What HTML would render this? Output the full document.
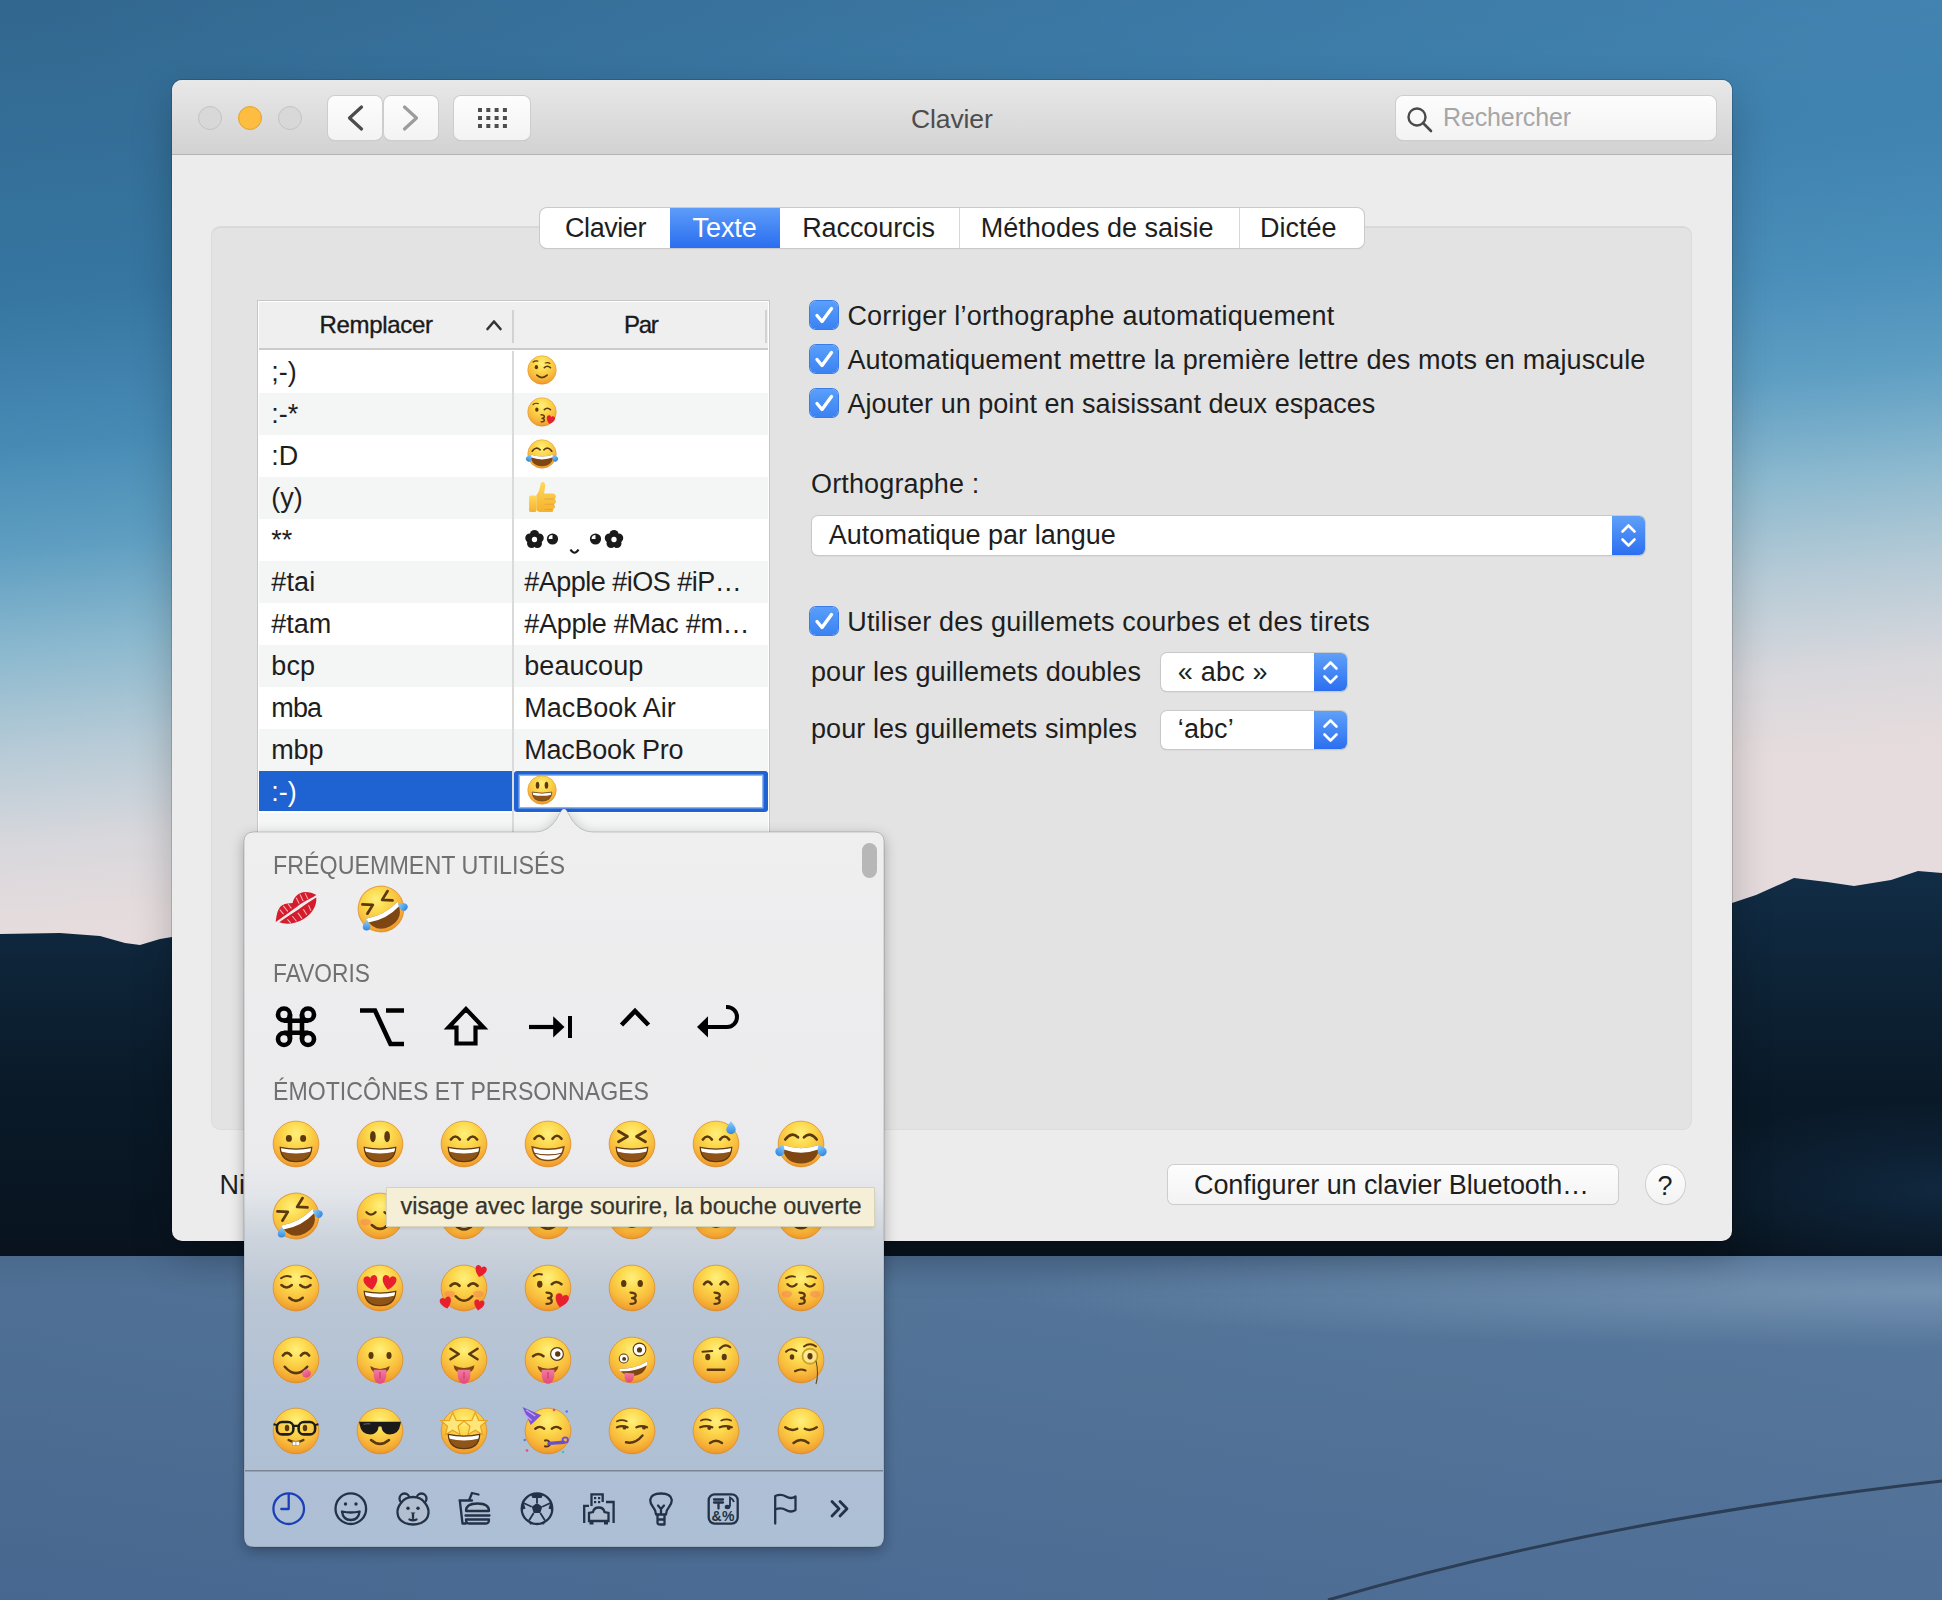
<!DOCTYPE html><html><head><meta charset="utf-8"><title>Clavier</title><style>
*{margin:0;padding:0;box-sizing:border-box}
html,body{width:1942px;height:1600px;overflow:hidden;background:#3a6b91}
body{position:relative;font-family:"Liberation Sans",sans-serif}
.a{position:absolute}
.t{position:absolute;white-space:nowrap;line-height:normal;font-family:"Liberation Sans",sans-serif}
svg.e{position:absolute;overflow:visible}
</style></head><body>
<svg width="0" height="0" style="position:absolute"><defs><radialGradient id="fg" cx="50%" cy="28%" r="75%"><stop offset="0" stop-color="#fff07c"/><stop offset="0.35" stop-color="#fcd84c"/><stop offset="0.68" stop-color="#f8bb3c"/><stop offset="0.88" stop-color="#f2a230"/><stop offset="1" stop-color="#e48c24"/></radialGradient><linearGradient id="dg" x1="0" y1="0" x2="0" y2="1"><stop offset="0" stop-color="#8fd0ff"/><stop offset="1" stop-color="#2f86e0"/></linearGradient><linearGradient id="tg" x1="0" y1="0" x2="0" y2="1"><stop offset="0" stop-color="#f37aa0"/><stop offset="1" stop-color="#e2497a"/></linearGradient><linearGradient id="hg" x1="0" y1="0" x2="0" y2="1"><stop offset="0" stop-color="#ffd85a"/><stop offset="1" stop-color="#f5b22c"/></linearGradient><symbol id="e-grin" viewBox="0 0 64 64" overflow="visible"><circle cx="32" cy="32" r="30.5" fill="url(#fg)"/><circle cx="32" cy="32" r="30.5" fill="none" stroke="#d98a28" stroke-width="1.3" opacity="0.75"/><ellipse cx="22.5" cy="24.5" rx="4" ry="4.6" fill="#5b3810"/><ellipse cx="41.5" cy="24.5" rx="4" ry="4.6" fill="#5b3810"/><path d="M11 36.5 Q32 41 53 36.5 Q52 55.5 32 55.5 Q12 55.5 11 36.5Z" fill="#8e5418"/><path d="M11 36.5 Q32 41 53 36.5 L52.3 42 Q32 47 11.7 42Z" fill="#fff"/><path d="M11 36.5 Q32 41 53 36.5 Q52 55.5 32 55.5 Q12 55.5 11 36.5Z" fill="none" stroke="#5b3810" stroke-width="1.6"/></symbol><symbol id="e-smiley" viewBox="0 0 64 64" overflow="visible"><circle cx="32" cy="32" r="30.5" fill="url(#fg)"/><circle cx="32" cy="32" r="30.5" fill="none" stroke="#d98a28" stroke-width="1.3" opacity="0.75"/><ellipse cx="22.5" cy="22" rx="3.8" ry="7.5" fill="#5b3810"/><ellipse cx="41.5" cy="22" rx="3.8" ry="7.5" fill="#5b3810"/><path d="M11 36.5 Q32 41 53 36.5 Q52 55.5 32 55.5 Q12 55.5 11 36.5Z" fill="#8e5418"/><path d="M11 36.5 Q32 41 53 36.5 L52.3 42 Q32 47 11.7 42Z" fill="#fff"/><path d="M11 36.5 Q32 41 53 36.5 Q52 55.5 32 55.5 Q12 55.5 11 36.5Z" fill="none" stroke="#5b3810" stroke-width="1.6"/></symbol><symbol id="e-smile" viewBox="0 0 64 64" overflow="visible"><circle cx="32" cy="32" r="30.5" fill="url(#fg)"/><circle cx="32" cy="32" r="30.5" fill="none" stroke="#d98a28" stroke-width="1.3" opacity="0.75"/><path d="M14.5 26 Q20.5 18.0 26.5 26" stroke="#5b3810" stroke-width="3.6" fill="none" stroke-linecap="round"/><path d="M37.5 26 Q43.5 18.0 49.5 26" stroke="#5b3810" stroke-width="3.6" fill="none" stroke-linecap="round"/><path d="M11 36.5 Q32 41 53 36.5 Q52 55.5 32 55.5 Q12 55.5 11 36.5Z" fill="#8e5418"/><path d="M11 36.5 Q32 41 53 36.5 L52.3 42 Q32 47 11.7 42Z" fill="#fff"/><path d="M11 36.5 Q32 41 53 36.5 Q52 55.5 32 55.5 Q12 55.5 11 36.5Z" fill="none" stroke="#5b3810" stroke-width="1.6"/></symbol><symbol id="e-beam" viewBox="0 0 64 64" overflow="visible"><circle cx="32" cy="32" r="30.5" fill="url(#fg)"/><circle cx="32" cy="32" r="30.5" fill="none" stroke="#d98a28" stroke-width="1.3" opacity="0.75"/><path d="M14 25 Q20 17.0 26 25" stroke="#5b3810" stroke-width="3.6" fill="none" stroke-linecap="round"/><path d="M38 25 Q44 17.0 50 25" stroke="#5b3810" stroke-width="3.6" fill="none" stroke-linecap="round"/><path d="M11 36 Q32 42 53 36 Q51 54 32 54 Q13 54 11 36Z" fill="#fff" stroke="#7d4613" stroke-width="2.2"/><path d="M12.5 44 Q32 49 51.5 44" stroke="#7d4613" stroke-width="1.6" fill="none"/></symbol><symbol id="e-squint" viewBox="0 0 64 64" overflow="visible"><circle cx="32" cy="32" r="30.5" fill="url(#fg)"/><circle cx="32" cy="32" r="30.5" fill="none" stroke="#d98a28" stroke-width="1.3" opacity="0.75"/><path d="M14 15 L26 22 L14 29" stroke="#5b3810" stroke-width="3.6" fill="none" stroke-linecap="round" stroke-linejoin="round"/><path d="M50 15 L38 22 L50 29" stroke="#5b3810" stroke-width="3.6" fill="none" stroke-linecap="round" stroke-linejoin="round"/><path d="M11 36.5 Q32 41 53 36.5 Q52 55.5 32 55.5 Q12 55.5 11 36.5Z" fill="#8e5418"/><path d="M11 36.5 Q32 41 53 36.5 L52.3 42 Q32 47 11.7 42Z" fill="#fff"/><path d="M11 36.5 Q32 41 53 36.5 Q52 55.5 32 55.5 Q12 55.5 11 36.5Z" fill="none" stroke="#5b3810" stroke-width="1.6"/></symbol><symbol id="e-sweat" viewBox="0 0 64 64" overflow="visible"><circle cx="32" cy="32" r="30.5" fill="url(#fg)"/><circle cx="32" cy="32" r="30.5" fill="none" stroke="#d98a28" stroke-width="1.3" opacity="0.75"/><path d="M14.5 26 Q20.5 18.0 26.5 26" stroke="#5b3810" stroke-width="3.6" fill="none" stroke-linecap="round"/><path d="M37.5 26 Q43.5 18.0 49.5 26" stroke="#5b3810" stroke-width="3.6" fill="none" stroke-linecap="round"/><path d="M11 36.5 Q32 41 53 36.5 Q52 55.5 32 55.5 Q12 55.5 11 36.5Z" fill="#8e5418"/><path d="M11 36.5 Q32 41 53 36.5 L52.3 42 Q32 47 11.7 42Z" fill="#fff"/><path d="M11 36.5 Q32 41 53 36.5 Q52 55.5 32 55.5 Q12 55.5 11 36.5Z" fill="none" stroke="#5b3810" stroke-width="1.6"/><path transform="translate(52 10) rotate(0) scale(1.05)" d="M0 -8 Q6 -1 6 2.5 A6 6 0 0 1 -6 2.5 Q-6 -1 0 -8Z" fill="url(#dg)"/></symbol><symbol id="e-joy" viewBox="0 0 64 64" overflow="visible"><circle cx="32" cy="32" r="30.5" fill="url(#fg)"/><circle cx="32" cy="32" r="30.5" fill="none" stroke="#d98a28" stroke-width="1.3" opacity="0.75"/><path d="M11 26 Q19 15 28 23" stroke="#5b3810" stroke-width="3.6" fill="none" stroke-linecap="round"/><path d="M36 23 Q45 15 53 26" stroke="#5b3810" stroke-width="3.6" fill="none" stroke-linecap="round"/><path d="M7 33 Q32 42 57 33 Q55 58 32 58 Q9 58 7 33Z" fill="#7d4613"/><path d="M7 33 Q32 42 57 33 L56 39 Q32 48 8 39Z" fill="#fff"/><path transform="translate(5 40) rotate(30) scale(1.0)" d="M0 -8 Q6 -1 6 2.5 A6 6 0 0 1 -6 2.5 Q-6 -1 0 -8Z" fill="url(#dg)"/><path transform="translate(59 40) rotate(-30) scale(1.0)" d="M0 -8 Q6 -1 6 2.5 A6 6 0 0 1 -6 2.5 Q-6 -1 0 -8Z" fill="url(#dg)"/></symbol><symbol id="e-rofl" viewBox="0 0 64 64" overflow="visible"><g transform="rotate(-28 32 32)"><circle cx="32" cy="32" r="30.5" fill="url(#fg)"/><circle cx="32" cy="32" r="30.5" fill="none" stroke="#d98a28" stroke-width="1.3" opacity="0.75"/><path d="M13 15 L25 22 L13 29" stroke="#5b3810" stroke-width="3.6" fill="none" stroke-linecap="round" stroke-linejoin="round"/><path d="M51 15 L39 22 L51 29" stroke="#5b3810" stroke-width="3.6" fill="none" stroke-linecap="round" stroke-linejoin="round"/><path d="M8 34 Q32 42 56 34 Q54 58 32 58 Q10 58 8 34Z" fill="#7d4613"/><path d="M8 34 Q32 42 56 34 L55 40 Q32 48 9 40Z" fill="#fff"/><path transform="translate(5 42) rotate(30) scale(0.85)" d="M0 -8 Q6 -1 6 2.5 A6 6 0 0 1 -6 2.5 Q-6 -1 0 -8Z" fill="url(#dg)"/><path transform="translate(59 42) rotate(-30) scale(0.85)" d="M0 -8 Q6 -1 6 2.5 A6 6 0 0 1 -6 2.5 Q-6 -1 0 -8Z" fill="url(#dg)"/></g></symbol><symbol id="e-relaxed" viewBox="0 0 64 64" overflow="visible"><circle cx="32" cy="32" r="30.5" fill="url(#fg)"/><circle cx="32" cy="32" r="30.5" fill="none" stroke="#d98a28" stroke-width="1.3" opacity="0.75"/><ellipse cx="13" cy="40" rx="7" ry="4.5" fill="#f47a5a" opacity="0.45"/><ellipse cx="51" cy="40" rx="7" ry="4.5" fill="#f47a5a" opacity="0.45"/><path d="M14 27 Q20 33.4 26 27" stroke="#5b3810" stroke-width="3.2" fill="none" stroke-linecap="round"/><path d="M38 27 Q44 33.4 50 27" stroke="#5b3810" stroke-width="3.2" fill="none" stroke-linecap="round"/><path d="M21 44 Q32 54.2 43 44" stroke="#5b3810" stroke-width="3.4" fill="none" stroke-linecap="round"/></symbol><symbol id="e-blush" viewBox="0 0 64 64" overflow="visible"><circle cx="32" cy="32" r="30.5" fill="url(#fg)"/><circle cx="32" cy="32" r="30.5" fill="none" stroke="#d98a28" stroke-width="1.3" opacity="0.75"/><ellipse cx="13" cy="40" rx="7" ry="4.5" fill="#f47a5a" opacity="0.45"/><ellipse cx="51" cy="40" rx="7" ry="4.5" fill="#f47a5a" opacity="0.45"/><path d="M14 27 Q20 19.8 26 27" stroke="#5b3810" stroke-width="3.6" fill="none" stroke-linecap="round"/><path d="M38 27 Q44 19.8 50 27" stroke="#5b3810" stroke-width="3.6" fill="none" stroke-linecap="round"/><path d="M19 43 Q32 56.6 45 43" stroke="#5b3810" stroke-width="3.4" fill="none" stroke-linecap="round"/></symbol><symbol id="e-halo" viewBox="0 0 64 64" overflow="visible"><circle cx="32" cy="32" r="30.5" fill="url(#fg)"/><circle cx="32" cy="32" r="30.5" fill="none" stroke="#d98a28" stroke-width="1.3" opacity="0.75"/><ellipse cx="20" cy="28" rx="3.4" ry="4.4" fill="#5b3810"/><ellipse cx="44" cy="28" rx="3.4" ry="4.4" fill="#5b3810"/><path d="M19 42 Q32 55.6 45 42" stroke="#5b3810" stroke-width="3.4" fill="none" stroke-linecap="round"/></symbol><symbol id="e-slight" viewBox="0 0 64 64" overflow="visible"><circle cx="32" cy="32" r="30.5" fill="url(#fg)"/><circle cx="32" cy="32" r="30.5" fill="none" stroke="#d98a28" stroke-width="1.3" opacity="0.75"/><ellipse cx="20" cy="24" rx="3.4" ry="4.6" fill="#5b3810"/><ellipse cx="44" cy="24" rx="3.4" ry="4.6" fill="#5b3810"/><path d="M21 42 Q32 50.5 43 42" stroke="#5b3810" stroke-width="3.4" fill="none" stroke-linecap="round"/></symbol><symbol id="e-upside" viewBox="0 0 64 64" overflow="visible"><circle cx="32" cy="32" r="30.5" fill="url(#fg)"/><circle cx="32" cy="32" r="30.5" fill="none" stroke="#d98a28" stroke-width="1.3" opacity="0.75"/><path d="M21 42 Q32 50.5 43 42" stroke="#5b3810" stroke-width="3.4" fill="none" stroke-linecap="round"/></symbol><symbol id="e-wink" viewBox="0 0 64 64" overflow="visible"><circle cx="32" cy="32" r="30.5" fill="url(#fg)"/><circle cx="32" cy="32" r="30.5" fill="none" stroke="#d98a28" stroke-width="1.3" opacity="0.75"/><ellipse cx="20" cy="26" rx="3.6" ry="4.6" fill="#5b3810"/><path d="M13 15 Q18 11 23 13" stroke="#5b3810" stroke-width="2.6" fill="none" stroke-linecap="round"/><path d="M37 27 Q43 21 50 27" stroke="#5b3810" stroke-width="3.4" fill="none" stroke-linecap="round"/><path d="M39 17 Q45 15 49 18" stroke="#5b3810" stroke-width="2.4" fill="none" stroke-linecap="round"/><path d="M21 43 Q32 53.2 43 43" stroke="#5b3810" stroke-width="3.4" fill="none" stroke-linecap="round"/></symbol><symbol id="e-relieved" viewBox="0 0 64 64" overflow="visible"><circle cx="32" cy="32" r="30.5" fill="url(#fg)"/><circle cx="32" cy="32" r="30.5" fill="none" stroke="#d98a28" stroke-width="1.3" opacity="0.75"/><path d="M12 19 Q18 14 25 17" stroke="#5b3810" stroke-width="2.6" fill="none" stroke-linecap="round"/><path d="M39 17 Q46 14 52 19" stroke="#5b3810" stroke-width="2.6" fill="none" stroke-linecap="round"/><path d="M12.5 28 Q19.5 34.4 26.5 28" stroke="#5b3810" stroke-width="3.2" fill="none" stroke-linecap="round"/><path d="M37.5 28 Q44.5 34.4 51.5 28" stroke="#5b3810" stroke-width="3.2" fill="none" stroke-linecap="round"/><path d="M23 45 Q32 53.5 41 45" stroke="#5b3810" stroke-width="3.4" fill="none" stroke-linecap="round"/></symbol><symbol id="e-hearteyes" viewBox="0 0 64 64" overflow="visible"><circle cx="32" cy="32" r="30.5" fill="url(#fg)"/><circle cx="32" cy="32" r="30.5" fill="none" stroke="#d98a28" stroke-width="1.3" opacity="0.75"/><path transform="translate(20 25) rotate(-10) scale(1.35)" d="M0 7 C-9 0 -8 -7 -3.5 -7 C-1.5 -7 0 -5.5 0 -4 C0 -5.5 1.5 -7 3.5 -7 C8 -7 9 0 0 7Z" fill="#e8202e"/><path transform="translate(44 25) rotate(10) scale(1.35)" d="M0 7 C-9 0 -8 -7 -3.5 -7 C-1.5 -7 0 -5.5 0 -4 C0 -5.5 1.5 -7 3.5 -7 C8 -7 9 0 0 7Z" fill="#e8202e"/><path d="M11 36.5 Q32 41 53 36.5 Q52 55.5 32 55.5 Q12 55.5 11 36.5Z" fill="#8e5418"/><path d="M11 36.5 Q32 41 53 36.5 L52.3 42 Q32 47 11.7 42Z" fill="#fff"/><path d="M11 36.5 Q32 41 53 36.5 Q52 55.5 32 55.5 Q12 55.5 11 36.5Z" fill="none" stroke="#5b3810" stroke-width="1.6"/></symbol><symbol id="e-hearts" viewBox="0 0 64 64" overflow="visible"><circle cx="32" cy="32" r="30.5" fill="url(#fg)"/><circle cx="32" cy="32" r="30.5" fill="none" stroke="#d98a28" stroke-width="1.3" opacity="0.75"/><ellipse cx="13" cy="40" rx="7" ry="4.5" fill="#f47a5a" opacity="0.45"/><ellipse cx="51" cy="40" rx="7" ry="4.5" fill="#f47a5a" opacity="0.45"/><path d="M14 29 Q20 22.6 26 29" stroke="#5b3810" stroke-width="3.6" fill="none" stroke-linecap="round"/><path d="M38 29 Q44 22.6 50 29" stroke="#5b3810" stroke-width="3.6" fill="none" stroke-linecap="round"/><path d="M21 43 Q32 54.9 43 43" stroke="#5b3810" stroke-width="3.4" fill="none" stroke-linecap="round"/><path transform="translate(54 10) rotate(15) scale(1.1)" d="M0 7 C-9 0 -8 -7 -3.5 -7 C-1.5 -7 0 -5.5 0 -4 C0 -5.5 1.5 -7 3.5 -7 C8 -7 9 0 0 7Z" fill="#e8202e"/><path transform="translate(8 52) rotate(-15) scale(1.1)" d="M0 7 C-9 0 -8 -7 -3.5 -7 C-1.5 -7 0 -5.5 0 -4 C0 -5.5 1.5 -7 3.5 -7 C8 -7 9 0 0 7Z" fill="#e8202e"/><path transform="translate(52 55) rotate(10) scale(1.0)" d="M0 7 C-9 0 -8 -7 -3.5 -7 C-1.5 -7 0 -5.5 0 -4 C0 -5.5 1.5 -7 3.5 -7 C8 -7 9 0 0 7Z" fill="#e8202e"/></symbol><symbol id="e-kissheart" viewBox="0 0 64 64" overflow="visible"><circle cx="32" cy="32" r="30.5" fill="url(#fg)"/><circle cx="32" cy="32" r="30.5" fill="none" stroke="#d98a28" stroke-width="1.3" opacity="0.75"/><ellipse cx="21" cy="27" rx="3.6" ry="4.6" fill="#5b3810"/><path d="M13 16 Q18 12 24 14" stroke="#5b3810" stroke-width="2.6" fill="none" stroke-linecap="round"/><path d="M37 27 Q43 21 50 27" stroke="#5b3810" stroke-width="3.4" fill="none" stroke-linecap="round"/><path d="M30 38 Q37 38 37 42 Q37 45 32 45.5 Q37 46 37 49.5 Q37 53 30 53" stroke="#5b3810" stroke-width="3" fill="none" stroke-linecap="round" stroke-linejoin="round"/><path transform="translate(50 49) rotate(15) scale(1.3)" d="M0 7 C-9 0 -8 -7 -3.5 -7 C-1.5 -7 0 -5.5 0 -4 C0 -5.5 1.5 -7 3.5 -7 C8 -7 9 0 0 7Z" fill="#e8202e"/></symbol><symbol id="e-kissing" viewBox="0 0 64 64" overflow="visible"><circle cx="32" cy="32" r="30.5" fill="url(#fg)"/><circle cx="32" cy="32" r="30.5" fill="none" stroke="#d98a28" stroke-width="1.3" opacity="0.75"/><ellipse cx="21" cy="26" rx="3.6" ry="4.8" fill="#5b3810"/><ellipse cx="43" cy="26" rx="3.6" ry="4.8" fill="#5b3810"/><path d="M30 38 Q37 38 37 42 Q37 45 32 45.5 Q37 46 37 49.5 Q37 53 30 53" stroke="#5b3810" stroke-width="3" fill="none" stroke-linecap="round" stroke-linejoin="round"/></symbol><symbol id="e-kisssmile" viewBox="0 0 64 64" overflow="visible"><circle cx="32" cy="32" r="30.5" fill="url(#fg)"/><circle cx="32" cy="32" r="30.5" fill="none" stroke="#d98a28" stroke-width="1.3" opacity="0.75"/><path d="M16 27 Q21 19.8 26 27" stroke="#5b3810" stroke-width="3.6" fill="none" stroke-linecap="round"/><path d="M38 27 Q43 19.8 48 27" stroke="#5b3810" stroke-width="3.6" fill="none" stroke-linecap="round"/><path d="M30 38 Q37 38 37 42 Q37 45 32 45.5 Q37 46 37 49.5 Q37 53 30 53" stroke="#5b3810" stroke-width="3" fill="none" stroke-linecap="round" stroke-linejoin="round"/></symbol><symbol id="e-kissclosed" viewBox="0 0 64 64" overflow="visible"><circle cx="32" cy="32" r="30.5" fill="url(#fg)"/><circle cx="32" cy="32" r="30.5" fill="none" stroke="#d98a28" stroke-width="1.3" opacity="0.75"/><ellipse cx="13" cy="40" rx="7" ry="4.5" fill="#f47a5a" opacity="0.45"/><ellipse cx="51" cy="40" rx="7" ry="4.5" fill="#f47a5a" opacity="0.45"/><path d="M14 27 Q20 33.4 26 27" stroke="#5b3810" stroke-width="3.2" fill="none" stroke-linecap="round"/><path d="M38 27 Q44 33.4 50 27" stroke="#5b3810" stroke-width="3.2" fill="none" stroke-linecap="round"/><path d="M12 19 Q18 15 24 17" stroke="#5b3810" stroke-width="2.4" fill="none" stroke-linecap="round"/><path d="M40 17 Q46 15 52 19" stroke="#5b3810" stroke-width="2.4" fill="none" stroke-linecap="round"/><path d="M30 38 Q37 38 37 42 Q37 45 32 45.5 Q37 46 37 49.5 Q37 53 30 53" stroke="#5b3810" stroke-width="3" fill="none" stroke-linecap="round" stroke-linejoin="round"/></symbol><symbol id="e-yum" viewBox="0 0 64 64" overflow="visible"><circle cx="32" cy="32" r="30.5" fill="url(#fg)"/><circle cx="32" cy="32" r="30.5" fill="none" stroke="#d98a28" stroke-width="1.3" opacity="0.75"/><path d="M14.5 26 Q20 18.8 25.5 26" stroke="#5b3810" stroke-width="3.6" fill="none" stroke-linecap="round"/><path d="M38.5 26 Q44 18.8 49.5 26" stroke="#5b3810" stroke-width="3.6" fill="none" stroke-linecap="round"/><path d="M17 41 Q32 58.0 47 41" stroke="#5b3810" stroke-width="3.4" fill="none" stroke-linecap="round"/><ellipse cx="46" cy="50" rx="6" ry="5.5" fill="url(#tg)" transform="rotate(-30 46 50)"/></symbol><symbol id="e-tongue" viewBox="0 0 64 64" overflow="visible"><circle cx="32" cy="32" r="30.5" fill="url(#fg)"/><circle cx="32" cy="32" r="30.5" fill="none" stroke="#d98a28" stroke-width="1.3" opacity="0.75"/><ellipse cx="20" cy="26" rx="3.4" ry="4.6" fill="#5b3810"/><ellipse cx="44" cy="26" rx="3.4" ry="4.6" fill="#5b3810"/><path d="M19 40 Q32 48 45 40 Q44 50 32 50 Q20 50 19 40Z" fill="#7d4613"/><path d="M23.5 45 Q22.5 63.5 32 63.5 Q41.5 63.5 40.5 45Z" fill="url(#tg)"/><path d="M32 48 L32 57" stroke="#c43a6a" stroke-width="1.4"/></symbol><symbol id="e-sqtongue" viewBox="0 0 64 64" overflow="visible"><circle cx="32" cy="32" r="30.5" fill="url(#fg)"/><circle cx="32" cy="32" r="30.5" fill="none" stroke="#d98a28" stroke-width="1.3" opacity="0.75"/><path d="M14 17 L25 24 L14 31" stroke="#5b3810" stroke-width="3.4" fill="none" stroke-linecap="round" stroke-linejoin="round"/><path d="M50 17 L39 24 L50 31" stroke="#5b3810" stroke-width="3.4" fill="none" stroke-linecap="round" stroke-linejoin="round"/><path d="M18 39 Q32 46 46 39 Q45 50 32 50 Q19 50 18 39Z" fill="#7d4613"/><path d="M23.5 45 Q22.5 63.5 32 63.5 Q41.5 63.5 40.5 45Z" fill="url(#tg)"/><path d="M32 48 L32 57" stroke="#c43a6a" stroke-width="1.4"/></symbol><symbol id="e-winktongue" viewBox="0 0 64 64" overflow="visible"><circle cx="32" cy="32" r="30.5" fill="url(#fg)"/><circle cx="32" cy="32" r="30.5" fill="none" stroke="#d98a28" stroke-width="1.3" opacity="0.75"/><path d="M12 27 Q19 21 26 27" stroke="#5b3810" stroke-width="3.4" fill="none" stroke-linecap="round"/><circle cx="44" cy="24" r="8.5" fill="#fff" stroke="#5b3810" stroke-width="1.6"/><circle cx="45" cy="24" r="3.6" fill="#5b3810"/><path d="M18 40 Q32 47 46 40 Q45 50 32 50 Q19 50 18 40Z" fill="#7d4613"/><path d="M23.5 45 Q22.5 63.5 32 63.5 Q41.5 63.5 40.5 45Z" fill="url(#tg)"/><path d="M32 48 L32 57" stroke="#c43a6a" stroke-width="1.4"/></symbol><symbol id="e-zany" viewBox="0 0 64 64" overflow="visible"><circle cx="32" cy="32" r="30.5" fill="url(#fg)"/><circle cx="32" cy="32" r="30.5" fill="none" stroke="#d98a28" stroke-width="1.3" opacity="0.75"/><circle cx="21" cy="30" r="6" fill="#fff" stroke="#5b3810" stroke-width="1.4"/><circle cx="21.5" cy="30.5" r="2.6" fill="#5b3810"/><circle cx="42" cy="18" r="8.5" fill="#fff" stroke="#5b3810" stroke-width="1.4"/><circle cx="42" cy="18.5" r="3.4" fill="#5b3810"/><path d="M15 44 Q36 44 52 34 Q52 50 36 53 Q20 54 15 44Z" fill="#7d4613"/><path d="M15 44 Q36 44 52 34 L52 39 Q36 48 16 47Z" fill="#fff"/><path d="M22 49 Q21 62 28 62 Q35 62 35 50Z" fill="url(#tg)"/></symbol><symbol id="e-raised" viewBox="0 0 64 64" overflow="visible"><circle cx="32" cy="32" r="30.5" fill="url(#fg)"/><circle cx="32" cy="32" r="30.5" fill="none" stroke="#d98a28" stroke-width="1.3" opacity="0.75"/><ellipse cx="21" cy="28" rx="3.4" ry="4.4" fill="#5b3810"/><ellipse cx="43" cy="28" rx="3.4" ry="4.4" fill="#5b3810"/><path d="M14 21 L27 20" stroke="#5b3810" stroke-width="2.6" stroke-linecap="round"/><path d="M37 17 Q44 9 51 15" stroke="#5b3810" stroke-width="2.8" fill="none" stroke-linecap="round"/><path d="M21 45 L43 45" stroke="#5b3810" stroke-width="3.2" stroke-linecap="round"/></symbol><symbol id="e-monocle" viewBox="0 0 64 64" overflow="visible"><circle cx="32" cy="32" r="30.5" fill="url(#fg)"/><circle cx="32" cy="32" r="30.5" fill="none" stroke="#d98a28" stroke-width="1.3" opacity="0.75"/><ellipse cx="20" cy="28" rx="3" ry="3.6" fill="#5b3810"/><path d="M12 21 Q18 15 26 20" stroke="#5b3810" stroke-width="2.6" fill="none" stroke-linecap="round"/><circle cx="44" cy="27" r="10" fill="#fff6c8" fill-opacity="0.5" stroke="#c9a227" stroke-width="2.4"/><ellipse cx="44" cy="27" rx="3.4" ry="4.2" fill="#5b3810"/><path d="M36 14 Q44 8 52 14" stroke="#5b3810" stroke-width="2.6" fill="none" stroke-linecap="round"/><path d="M52 33 Q56 50 52 64" stroke="#5b4a1a" stroke-width="1.4" fill="none"/><path d="M24 47 Q31 43 38 46" stroke="#5b3810" stroke-width="2.8" fill="none" stroke-linecap="round"/></symbol><symbol id="e-nerd" viewBox="0 0 64 64" overflow="visible"><circle cx="32" cy="32" r="30.5" fill="url(#fg)"/><circle cx="32" cy="32" r="30.5" fill="none" stroke="#d98a28" stroke-width="1.3" opacity="0.75"/><ellipse cx="20" cy="28" rx="3" ry="4.4" fill="#5b3810"/><ellipse cx="44" cy="28" rx="3" ry="4.4" fill="#5b3810"/><rect x="6.5" y="20" width="22" height="16.5" rx="7" fill="none" stroke="#1d1d1d" stroke-width="3.4"/><rect x="35.5" y="20" width="22" height="16.5" rx="7" fill="none" stroke="#1d1d1d" stroke-width="3.4"/><path d="M28.5 25 L35.5 25 M2 23 L6.5 24 M57.5 24 L62 23" stroke="#1d1d1d" stroke-width="3"/><path d="M22 44 Q32 50 42 44" stroke="#5b3810" stroke-width="3" fill="none" stroke-linecap="round"/><rect x="27.5" y="46" width="4.5" height="5" fill="#fff" stroke="#9a8a70" stroke-width="0.7"/><rect x="32" y="46" width="4.5" height="5" fill="#fff" stroke="#9a8a70" stroke-width="0.7"/></symbol><symbol id="e-cool" viewBox="0 0 64 64" overflow="visible"><circle cx="32" cy="32" r="30.5" fill="url(#fg)"/><circle cx="32" cy="32" r="30.5" fill="none" stroke="#d98a28" stroke-width="1.3" opacity="0.75"/><path d="M4 19.5 L60 19.5 L59 24 Q57 36.5 45 36.5 Q35 36.5 33.8 26 L30.2 26 Q29 36.5 19 36.5 Q7 36.5 5 24Z" fill="#1a1a1a"/><path d="M10 23 Q14 22 19 22.5" stroke="#666" stroke-width="1.6" fill="none"/><path d="M20 44 Q32 54.2 44 44" stroke="#5b3810" stroke-width="3.4" fill="none" stroke-linecap="round"/></symbol><symbol id="e-star" viewBox="0 0 64 64" overflow="visible"><circle cx="32" cy="32" r="30.5" fill="url(#fg)"/><circle cx="32" cy="32" r="30.5" fill="none" stroke="#d98a28" stroke-width="1.3" opacity="0.75"/><path transform="translate(17 23) scale(1.75)" d="M0 -9 L2.6 -3 L9 -2.8 L4 1.5 L5.6 8 L0 4.5 L-5.6 8 L-4 1.5 L-9 -2.8 L-2.6 -3Z" fill="#ffe67a" stroke="#e7a21e" stroke-width="0.9"/><path transform="translate(47 23) scale(1.75)" d="M0 -9 L2.6 -3 L9 -2.8 L4 1.5 L5.6 8 L0 4.5 L-5.6 8 L-4 1.5 L-9 -2.8 L-2.6 -3Z" fill="#ffe67a" stroke="#e7a21e" stroke-width="0.9"/><path d="M11 36.5 Q32 41 53 36.5 Q52 55.5 32 55.5 Q12 55.5 11 36.5Z" fill="#8e5418"/><path d="M11 36.5 Q32 41 53 36.5 L52.3 42 Q32 47 11.7 42Z" fill="#fff"/><path d="M11 36.5 Q32 41 53 36.5 Q52 55.5 32 55.5 Q12 55.5 11 36.5Z" fill="none" stroke="#5b3810" stroke-width="1.6"/></symbol><symbol id="e-party" viewBox="0 0 64 64" overflow="visible"><circle cx="32" cy="32" r="30.5" fill="url(#fg)"/><circle cx="32" cy="32" r="30.5" fill="none" stroke="#d98a28" stroke-width="1.3" opacity="0.75"/><path d="M15 29 Q21 24.2 27 29" stroke="#5b3810" stroke-width="3" fill="none" stroke-linecap="round"/><path d="M37 29 Q43 24.2 49 29" stroke="#5b3810" stroke-width="3" fill="none" stroke-linecap="round"/><path d="M-2 0 L23 11 L9 24Z" fill="#7b55d8"/><path d="M3 4 L15 12 M0 9 L10 18" stroke="#c9a8f5" stroke-width="2"/><path d="M27 45 Q32 43 34 47 Q31 49 34 51 Q32 54 27 52" stroke="#5b3810" stroke-width="2.6" fill="none"/><path d="M34 48.5 L53 47" stroke="#6a4fd0" stroke-width="4.5" stroke-linecap="round"/><circle cx="55" cy="44" r="3.6" fill="none" stroke="#6a4fd0" stroke-width="2.4"/><circle cx="40" cy="4" r="1.8" fill="#e0507a"/><circle cx="57" cy="6" r="1.8" fill="#5b7de8"/><circle cx="1" cy="44" r="1.8" fill="#5b7de8"/><circle cx="4" cy="58" r="1.8" fill="#e0507a"/><circle cx="52" cy="60" r="1.6" fill="#4ac0a0"/><circle cx="60" cy="22" r="1.6" fill="#f0c040"/></symbol><symbol id="e-smirk" viewBox="0 0 64 64" overflow="visible"><circle cx="32" cy="32" r="30.5" fill="url(#fg)"/><circle cx="32" cy="32" r="30.5" fill="none" stroke="#d98a28" stroke-width="1.3" opacity="0.75"/><path d="M12 27 Q19 24 26 27 M38 27 Q45 24 52 27" stroke="#5b3810" stroke-width="3.2" fill="none" stroke-linecap="round"/><circle cx="22" cy="27.5" r="2.6" fill="#5b3810"/><circle cx="48" cy="27.5" r="2.6" fill="#5b3810"/><path d="M12 19 Q18 16 25 19" stroke="#5b3810" stroke-width="2.4" fill="none" stroke-linecap="round"/><path d="M24 47 Q36 50 46 38" stroke="#5b3810" stroke-width="3.2" fill="none" stroke-linecap="round"/></symbol><symbol id="e-unamused" viewBox="0 0 64 64" overflow="visible"><circle cx="32" cy="32" r="30.5" fill="url(#fg)"/><circle cx="32" cy="32" r="30.5" fill="none" stroke="#d98a28" stroke-width="1.3" opacity="0.75"/><path d="M11 27 Q19 24 27 27 M37 27 Q45 24 53 27" stroke="#5b3810" stroke-width="3.2" fill="none" stroke-linecap="round"/><circle cx="23" cy="28" r="2.6" fill="#5b3810"/><circle cx="49" cy="28" r="2.6" fill="#5b3810"/><path d="M12 18 Q18 15 25 18 M39 18 Q46 15 52 18" stroke="#5b3810" stroke-width="2.4" fill="none" stroke-linecap="round"/><path d="M24 48 Q32 42 40 48" stroke="#5b3810" stroke-width="3.2" fill="none" stroke-linecap="round"/></symbol><symbol id="e-disappointed" viewBox="0 0 64 64" overflow="visible"><circle cx="32" cy="32" r="30.5" fill="url(#fg)"/><circle cx="32" cy="32" r="30.5" fill="none" stroke="#d98a28" stroke-width="1.3" opacity="0.75"/><path d="M11 27 Q19 33 27 29 M37 29 Q45 33 53 27" stroke="#5b3810" stroke-width="3.2" fill="none" stroke-linecap="round"/><path d="M22 48 Q32 40 42 48" stroke="#5b3810" stroke-width="3.2" fill="none" stroke-linecap="round"/></symbol><symbol id="e-lips" viewBox="0 0 64 64" overflow="visible"><g transform="rotate(-32 32 34)"><path d="M-2 35 C4 28 10 20 18 20 C24 20 28 23 32 25 C36 21 42 18 48 19 C56 20 62 27 66 33 C52 33 42 31 32 33 C20 34 8 35 -2 35Z" fill="#d41c2c"/><path d="M2 38 C14 37 24 37 34 37 C46 36 54 36 64 36 C60 44 50 52 34 52 C20 52 8 46 2 38Z" fill="#d41c2c"/><path d="M12 24 L13 31 M19 22 L20 31 M26 23 L26.5 30 M40 22 L39.5 30 M47 21 L46 30 M54 23 L53 31 M14 41 L15 47 M22 41 L23 49 M31 41 L31.5 50 M40 41 L40 49 M49 40 L48 47" stroke="#f6b0b8" stroke-width="1.5" stroke-linecap="round"/></g></symbol><symbol id="e-thumb" viewBox="0 0 64 64" overflow="visible"><path d="M20 30 Q26 22 28 10 Q29 3 34 4 Q38 6 37 14 L35 26 L52 26 Q58 27 58 32 Q58 36 55 37 Q59 39 58 43 Q57 46 54 47 Q57 49 56 53 Q55 56 52 57 Q54 60 51 62 L26 62 Q20 60 20 56Z" fill="url(#hg)"/><rect x="6" y="30" width="14" height="32" rx="3" fill="url(#hg)"/><path d="M36 37 L55 37 M36 47 L54 47 M36 57 L51 57" stroke="#e0a23a" stroke-width="1.6"/></symbol></defs></svg>
<svg class="a" style="left:0;top:0" width="1942" height="1600" viewBox="0 0 1942 1600">
<defs>
<linearGradient id="sky" gradientUnits="userSpaceOnUse" x1="0" y1="0" x2="90.6" y2="926.1">
<stop offset="0" stop-color="#32678f"/>
<stop offset="0.32" stop-color="#3676a1"/>
<stop offset="0.48" stop-color="#478bb5"/>
<stop offset="0.59" stop-color="#5f9ec1"/>
<stop offset="0.695" stop-color="#8ab8ce"/>
<stop offset="0.80" stop-color="#b5cad6"/>
<stop offset="0.91" stop-color="#d9d8dc"/>
<stop offset="1" stop-color="#e6dcdd"/>
</linearGradient>
<radialGradient id="skyhl" gradientUnits="userSpaceOnUse" cx="1942" cy="0" r="1" gradientTransform="translate(1942 0) scale(1900 480) translate(-1942 0)">
<stop offset="0" stop-color="#58a0d4" stop-opacity="0.38"/>
<stop offset="1" stop-color="#58a0d4" stop-opacity="0"/>
</radialGradient>
<linearGradient id="lakeh" x1="0" y1="0" x2="1" y2="0">
<stop offset="0" stop-color="#8fb0d0" stop-opacity="0"/>
<stop offset="0.45" stop-color="#8fb0d0" stop-opacity="0.06"/>
<stop offset="1" stop-color="#8fb0d0" stop-opacity="0.12"/>
</linearGradient>
<radialGradient id="lakehl" gradientUnits="userSpaceOnUse" cx="1942" cy="1292" r="1" gradientTransform="translate(1942 1292) scale(950 55) translate(-1942 -1292)">
<stop offset="0" stop-color="#8aa6c2" stop-opacity="0.55"/>
<stop offset="1" stop-color="#8aa6c2" stop-opacity="0"/>
</radialGradient>
<radialGradient id="mhz" gradientUnits="userSpaceOnUse" cx="1942" cy="1190" r="1" gradientTransform="translate(1942 1190) scale(300 90) translate(-1942 -1190)">
<stop offset="0" stop-color="#17395a" stop-opacity="0.5"/>
<stop offset="1" stop-color="#17395a" stop-opacity="0"/>
</radialGradient>
<linearGradient id="mtn" x1="0" y1="0" x2="0" y2="1">
<stop offset="0" stop-color="#112d46"/>
<stop offset="0.25" stop-color="#0e2438"/>
<stop offset="0.55" stop-color="#0a1a29"/>
<stop offset="1" stop-color="#08131e"/>
</linearGradient>
<linearGradient id="lake" x1="0" y1="0" x2="0" y2="1">
<stop offset="0" stop-color="#4a698d"/>
<stop offset="0.1" stop-color="#4f7094"/>
<stop offset="0.5" stop-color="#4c6c92"/>
<stop offset="1" stop-color="#476790"/>
</linearGradient>
</defs>
<rect x="0" y="0" width="1942" height="1000" fill="url(#sky)"/>
<rect x="0" y="0" width="1942" height="1000" fill="url(#skyhl)"/>
<path d="M0 934 L60 933 L100 936 L125 943 L140 945 L160 939 L172 937 L1732 903 L1756 895 L1794 878 L1827 882 L1854 886 L1891 880 L1918 871 L1942 873 L1942 1260 L0 1260 Z" fill="url(#mtn)"/>
<rect x="1600" y="1050" width="342" height="210" fill="url(#mhz)"/>
<rect x="0" y="1256" width="1942" height="344" fill="url(#lake)"/>
<rect x="0" y="1256" width="1942" height="344" fill="url(#lakeh)"/>
<rect x="0" y="1256" width="1942" height="344" fill="url(#lakehl)"/>
<path d="M1328 1600 Q1600 1520 1942 1481" stroke="#2b3e55" stroke-width="3" fill="none"/>
</svg>
<div class="a" style="left:172px;top:80px;width:1560px;height:1161px;border-radius:10px;background:#ececec;box-shadow:0 16px 40px rgba(0,0,0,0.22),0 0 0 1px rgba(0,0,0,0.15);overflow:hidden"><div class="a" style="left:0;top:0;width:1560px;height:75px;background:linear-gradient(#e8e8e8,#d2d2d2);border-bottom:1px solid #b4b4b4"></div></div><div class="a" style="left:198px;top:106px;width:24px;height:24px;border-radius:50%;background:#d8d8d8;border:1px solid #c3c3c3"></div><div class="a" style="left:238px;top:106px;width:24px;height:24px;border-radius:50%;background:#fdbd41;border:1px solid #e3a22d"></div><div class="a" style="left:278px;top:106px;width:24px;height:24px;border-radius:50%;background:#d8d8d8;border:1px solid #c3c3c3"></div><div class="a" style="left:328px;top:96px;width:54px;height:44px;border-radius:7px;background:linear-gradient(#fdfdfd,#f3f3f3);box-shadow:0 0 0 1px #cdcdcd,0 1px 1px rgba(0,0,0,0.12);"></div><div class="a" style="left:384px;top:96px;width:54px;height:44px;border-radius:7px;background:linear-gradient(#fdfdfd,#f3f3f3);box-shadow:0 0 0 1px #cdcdcd,0 1px 1px rgba(0,0,0,0.12);"></div><div class="a" style="left:454px;top:96px;width:76px;height:44px;border-radius:7px;background:linear-gradient(#fdfdfd,#f3f3f3);box-shadow:0 0 0 1px #cdcdcd,0 1px 1px rgba(0,0,0,0.12);"></div><svg class="a" style="left:0;top:0" width="1942" height="200"><path d="M361.5 107 L349.5 118 L361.5 129" stroke="#4b4b4b" stroke-width="3.2" fill="none" stroke-linecap="round" stroke-linejoin="round"/><path d="M404.5 107 L416.5 118 L404.5 129" stroke="#9c9c9c" stroke-width="3.2" fill="none" stroke-linecap="round" stroke-linejoin="round"/><rect x="478.0" y="108" width="4" height="4" fill="#4d4d4d"/><rect x="478.0" y="116" width="4" height="4" fill="#4d4d4d"/><rect x="478.0" y="124" width="4" height="4" fill="#4d4d4d"/><rect x="486.3" y="108" width="4" height="4" fill="#4d4d4d"/><rect x="486.3" y="116" width="4" height="4" fill="#4d4d4d"/><rect x="486.3" y="124" width="4" height="4" fill="#4d4d4d"/><rect x="494.6" y="108" width="4" height="4" fill="#4d4d4d"/><rect x="494.6" y="116" width="4" height="4" fill="#4d4d4d"/><rect x="494.6" y="124" width="4" height="4" fill="#4d4d4d"/><rect x="502.9" y="108" width="4" height="4" fill="#4d4d4d"/><rect x="502.9" y="116" width="4" height="4" fill="#4d4d4d"/><rect x="502.9" y="124" width="4" height="4" fill="#4d4d4d"/><circle cx="1417" cy="117" r="8.5" stroke="#4a4a4a" stroke-width="2.4" fill="none"/><path d="M1423 123 L1431 131" stroke="#4a4a4a" stroke-width="2.6" stroke-linecap="round"/></svg><div class="t" style="left:911px;top:104.02px;font-size:26.5px;color:#4d4d4d;letter-spacing:-0.109px;">Clavier</div>
<div class="a" style="left:1396px;top:96px;width:320px;height:44px;border-radius:7px;background:linear-gradient(#fdfdfd,#f3f3f3);box-shadow:0 0 0 1px #cdcdcd,0 1px 1px rgba(0,0,0,0.12);"></div><svg class="a" style="left:0;top:0" width="1942" height="200"><circle cx="1417" cy="117" r="8.5" stroke="#4a4a4a" stroke-width="2.4" fill="none"/><path d="M1423 123 L1431 131" stroke="#4a4a4a" stroke-width="2.6" stroke-linecap="round"/></svg><div class="t" style="left:1443px;top:103.38px;font-size:25px;color:#a6a6a6;letter-spacing:-0.122px;">Rechercher</div>
<div class="a" style="left:212px;top:227px;width:1479px;height:902px;border-radius:8px;background:#e3e3e3;box-shadow:inset 0 1px 0 #d6d6d6,0 0 0 1px #dcdcdc"></div><div class="a" style="left:540px;top:208px;width:824px;height:40px;border-radius:7px;background:#fff;box-shadow:0 0 0 1px #c9c9c9,0 1px 1px rgba(0,0,0,0.15);overflow:hidden"><div class="a" style="left:130px;top:0;width:110px;height:40px;background:linear-gradient(#5d9cf8,#2a6ef0)"></div><div class="a" style="left:419px;top:0;width:1px;height:40px;background:#d8d8d8"></div><div class="a" style="left:699px;top:0;width:1px;height:40px;background:#d8d8d8"></div></div><div class="t" style="left:565px;top:212.56px;font-size:27px;color:#1e1e1e;letter-spacing:-0.431px;">Clavier</div>
<div class="t" style="left:692.6px;top:212.56px;font-size:27px;color:#ffffff;letter-spacing:-0.107px;">Texte</div>
<div class="t" style="left:802.2px;top:212.56px;font-size:27px;color:#1e1e1e;letter-spacing:-0.093px;">Raccourcis</div>
<div class="t" style="left:980.8px;top:212.56px;font-size:27px;color:#1e1e1e;letter-spacing:0.009px;">Méthodes de saisie</div>
<div class="t" style="left:1260px;top:212.56px;font-size:27px;color:#1e1e1e;letter-spacing:0.012px;">Dictée</div>
<div class="a" style="left:258px;top:301px;width:511px;height:800px;background:#fff;box-shadow:0 0 0 1px #c6c6c6"></div><div class="a" style="left:259px;top:302px;width:509px;height:48px;background:#efefef;border-bottom:2px solid #cbcbcb"></div><div class="a" style="left:512px;top:310px;width:1.5px;height:33px;background:#d2d2d2"></div><div class="a" style="left:765px;top:310px;width:1.5px;height:33px;background:#d2d2d2"></div><div class="a" style="left:259px;top:351px;width:509px;height:42px;background:#ffffff"></div><div class="a" style="left:259px;top:393px;width:509px;height:42px;background:#f4f5f5"></div><div class="a" style="left:259px;top:435px;width:509px;height:42px;background:#ffffff"></div><div class="a" style="left:259px;top:477px;width:509px;height:42px;background:#f4f5f5"></div><div class="a" style="left:259px;top:519px;width:509px;height:42px;background:#ffffff"></div><div class="a" style="left:259px;top:561px;width:509px;height:42px;background:#f4f5f5"></div><div class="a" style="left:259px;top:603px;width:509px;height:42px;background:#ffffff"></div><div class="a" style="left:259px;top:645px;width:509px;height:42px;background:#f4f5f5"></div><div class="a" style="left:259px;top:687px;width:509px;height:42px;background:#ffffff"></div><div class="a" style="left:259px;top:729px;width:509px;height:42px;background:#f4f5f5"></div><div class="a" style="left:259px;top:771px;width:509px;height:42px;background:#ffffff"></div><div class="a" style="left:259px;top:813px;width:509px;height:42px;background:#f4f5f5"></div><div class="a" style="left:512px;top:351px;width:1.5px;height:760px;background:#dadada"></div><div class="t" style="left:319.6px;top:311.28px;font-size:24px;color:#1a1a1a;letter-spacing:-0.338px;-webkit-text-stroke:0.35px #1a1a1a">Remplacer</div>
<div class="t" style="left:624px;top:311.28px;font-size:24px;color:#1a1a1a;letter-spacing:-1.283px;-webkit-text-stroke:0.35px #1a1a1a">Par</div>
<svg class="a" style="left:0;top:0" width="1000" height="400"><path d="M487.5 329 L494 321.5 L500.5 329" stroke="#333" stroke-width="2.6" fill="none" stroke-linecap="round" stroke-linejoin="round"/></svg><div class="t" style="left:271.3px;top:356.56px;font-size:27px;color:#1e1e1e;letter-spacing:0.000px;">;-)</div>
<div class="t" style="left:271.3px;top:398.56px;font-size:27px;color:#1e1e1e;letter-spacing:0.000px;">:-*</div>
<div class="t" style="left:271.3px;top:440.56px;font-size:27px;color:#1e1e1e;letter-spacing:0.000px;">:D</div>
<div class="t" style="left:271.3px;top:482.56px;font-size:27px;color:#1e1e1e;letter-spacing:0.000px;">(y)</div>
<div class="t" style="left:271.3px;top:524.57px;font-size:27px;color:#1e1e1e;letter-spacing:0.000px;">**</div>
<div class="t" style="left:271.3px;top:566.57px;font-size:27px;color:#1e1e1e;letter-spacing:0.117px;">#tai</div>
<div class="t" style="left:271.3px;top:608.57px;font-size:27px;color:#1e1e1e;letter-spacing:-0.006px;">#tam</div>
<div class="t" style="left:271.3px;top:650.57px;font-size:27px;color:#1e1e1e;letter-spacing:0.156px;">bcp</div>
<div class="t" style="left:271.3px;top:692.57px;font-size:27px;color:#1e1e1e;letter-spacing:-0.841px;">mba</div>
<div class="t" style="left:271.3px;top:734.57px;font-size:27px;color:#1e1e1e;letter-spacing:-0.174px;">mbp</div>
<div class="t" style="left:524.3px;top:566.57px;font-size:27px;color:#1e1e1e;letter-spacing:-0.508px;">#Apple #iOS #iP…</div>
<div class="t" style="left:524.3px;top:608.57px;font-size:27px;color:#1e1e1e;letter-spacing:-0.307px;">#Apple #Mac #m…</div>
<div class="t" style="left:524.3px;top:650.57px;font-size:27px;color:#1e1e1e;letter-spacing:0.049px;">beaucoup</div>
<div class="t" style="left:524.3px;top:692.57px;font-size:27px;color:#1e1e1e;letter-spacing:-0.005px;">MacBook Air</div>
<div class="t" style="left:524.3px;top:734.57px;font-size:27px;color:#1e1e1e;letter-spacing:-0.279px;">MacBook Pro</div>
<div class="a" style="left:259px;top:771px;width:253px;height:40px;background:#1f62d2"></div><div class="a" style="left:514px;top:770.5px;width:254px;height:41px;border-radius:3px;background:#1f62d2"></div><div class="a" style="left:520px;top:775.5px;width:242px;height:31px;background:#fff;box-shadow:0 0 0 1.5px #8fb4f0"></div><div class="t" style="left:271.3px;top:776.57px;font-size:27px;color:#ffffff;letter-spacing:0.000px;">:-)</div>
<div class="a" style="left:810px;top:301px;width:28px;height:28px;border-radius:6px;background:linear-gradient(#5a9ffa,#3a82f2);box-shadow:0 0 0 1px #3a7de8"></div><svg class="a" style="left:810px;top:301px" width="28" height="28"><path d="M7 14.5 L12 20.5 L21.5 7.5" stroke="#fff" stroke-width="3.4" fill="none" stroke-linecap="round" stroke-linejoin="round"/></svg><div class="t" style="left:847.4px;top:300.56px;font-size:27px;color:#1e1e1e;letter-spacing:0.217px;">Corriger l’orthographe automatiquement</div>
<div class="a" style="left:810px;top:345px;width:28px;height:28px;border-radius:6px;background:linear-gradient(#5a9ffa,#3a82f2);box-shadow:0 0 0 1px #3a7de8"></div><svg class="a" style="left:810px;top:345px" width="28" height="28"><path d="M7 14.5 L12 20.5 L21.5 7.5" stroke="#fff" stroke-width="3.4" fill="none" stroke-linecap="round" stroke-linejoin="round"/></svg><div class="t" style="left:847.4px;top:344.56px;font-size:27px;color:#1e1e1e;letter-spacing:0.138px;">Automatiquement mettre la première lettre des mots en majuscule</div>
<div class="a" style="left:810px;top:389px;width:28px;height:28px;border-radius:6px;background:linear-gradient(#5a9ffa,#3a82f2);box-shadow:0 0 0 1px #3a7de8"></div><svg class="a" style="left:810px;top:389px" width="28" height="28"><path d="M7 14.5 L12 20.5 L21.5 7.5" stroke="#fff" stroke-width="3.4" fill="none" stroke-linecap="round" stroke-linejoin="round"/></svg><div class="t" style="left:847.4px;top:388.56px;font-size:27px;color:#1e1e1e;letter-spacing:0.027px;">Ajouter un point en saisissant deux espaces</div>
<div class="t" style="left:811px;top:468.56px;font-size:27px;color:#1e1e1e;letter-spacing:0.139px;">Orthographe :</div>
<div class="a" style="left:812px;top:516px;width:833px;height:39px;border-radius:6px;background:#fff;box-shadow:0 0 0 1px #c9c9c9,0 1px 1.5px rgba(0,0,0,0.2);overflow:hidden"><div class="a" style="right:0;top:0;width:33px;height:39px;background:linear-gradient(#5fa0f9,#2b6ff0)"></div></div><svg class="a" style="left:1612px;top:516px" width="33" height="39"><path d="M10.5 15.5 L16.5 9.5 L22.5 15.5 M10.5 23.5 L16.5 29.5 L22.5 23.5" stroke="#fff" stroke-width="2.6" fill="none" stroke-linecap="round" stroke-linejoin="round"/></svg><div class="t" style="left:828.8px;top:519.57px;font-size:27px;color:#1e1e1e;letter-spacing:0.014px;">Automatique par langue</div>
<div class="a" style="left:810px;top:607px;width:28px;height:28px;border-radius:6px;background:linear-gradient(#5a9ffa,#3a82f2);box-shadow:0 0 0 1px #3a7de8"></div><svg class="a" style="left:810px;top:607px" width="28" height="28"><path d="M7 14.5 L12 20.5 L21.5 7.5" stroke="#fff" stroke-width="3.4" fill="none" stroke-linecap="round" stroke-linejoin="round"/></svg><div class="t" style="left:847.2px;top:606.57px;font-size:27px;color:#1e1e1e;letter-spacing:0.211px;">Utiliser des guillemets courbes et des tirets</div>
<div class="t" style="left:811px;top:656.57px;font-size:27px;color:#1e1e1e;letter-spacing:0.104px;">pour les guillemets doubles</div>
<div class="a" style="left:1161px;top:653px;width:186px;height:38px;border-radius:6px;background:#fff;box-shadow:0 0 0 1px #c9c9c9,0 1px 1.5px rgba(0,0,0,0.2);overflow:hidden"><div class="a" style="right:0;top:0;width:33px;height:38px;background:linear-gradient(#5fa0f9,#2b6ff0)"></div></div><svg class="a" style="left:1314px;top:653px" width="33" height="38"><path d="M10.5 15.5 L16.5 9.5 L22.5 15.5 M10.5 23.5 L16.5 29.5 L22.5 23.5" stroke="#fff" stroke-width="2.6" fill="none" stroke-linecap="round" stroke-linejoin="round"/></svg><div class="t" style="left:1177.8px;top:656.57px;font-size:27px;color:#1e1e1e;letter-spacing:0.205px;">« abc »</div>
<div class="t" style="left:811px;top:713.57px;font-size:27px;color:#1e1e1e;letter-spacing:0.069px;">pour les guillemets simples</div>
<div class="a" style="left:1161px;top:711px;width:186px;height:38px;border-radius:6px;background:#fff;box-shadow:0 0 0 1px #c9c9c9,0 1px 1.5px rgba(0,0,0,0.2);overflow:hidden"><div class="a" style="right:0;top:0;width:33px;height:38px;background:linear-gradient(#5fa0f9,#2b6ff0)"></div></div><svg class="a" style="left:1314px;top:711px" width="33" height="38"><path d="M10.5 15.5 L16.5 9.5 L22.5 15.5 M10.5 23.5 L16.5 29.5 L22.5 23.5" stroke="#fff" stroke-width="2.6" fill="none" stroke-linecap="round" stroke-linejoin="round"/></svg><div class="t" style="left:1177.8px;top:713.57px;font-size:27px;color:#1e1e1e;letter-spacing:0.094px;">‘abc’</div>
<div class="t" style="left:219.4px;top:1170.16px;font-size:27px;color:#1e1e1e;letter-spacing:0.000px;">Ni</div>
<div class="a" style="left:1168px;top:1165px;width:450px;height:39px;border-radius:6px;background:linear-gradient(#fdfdfd,#f3f3f3);box-shadow:0 0 0 1px #cdcdcd,0 1px 1px rgba(0,0,0,0.12);"></div><div class="t" style="left:1194px;top:1169.57px;font-size:27px;color:#1e1e1e;letter-spacing:-0.084px;">Configurer un clavier Bluetooth…</div>
<div class="a" style="left:1646px;top:1165px;width:39px;height:39px;border-radius:50%;background:linear-gradient(#fdfdfd,#f3f3f3);box-shadow:0 0 0 1px #cdcdcd,0 1px 1px rgba(0,0,0,0.15)"></div><div class="t" style="left:1657.5px;top:1170.57px;font-size:27px;color:#1e1e1e;letter-spacing:0.000px;">?</div>
<svg class="e" style="left:527.3px;top:354.5px" width="30" height="30" viewBox="0 0 64 64"><use href="#e-wink"/></svg><svg class="e" style="left:527.3px;top:396.5px" width="30" height="30" viewBox="0 0 64 64"><use href="#e-kissheart"/></svg><svg class="e" style="left:527.3px;top:438.5px" width="30" height="30" viewBox="0 0 64 64"><use href="#e-joy"/></svg><svg class="e" style="left:525.8px;top:480.0px" width="33" height="33" viewBox="0 0 64 64"><use href="#e-thumb"/></svg><svg class="e" style="left:527.0px;top:775.0px" width="30" height="30" viewBox="0 0 64 64"><use href="#e-smiley"/></svg><svg class="a" style="left:0;top:0" width="800" height="600"><g transform="translate(534.5 539.5)"><circle cx="0.00" cy="-4.94" r="4.56" fill="#1a1a1a"/><circle cx="4.70" cy="-1.53" r="4.56" fill="#1a1a1a"/><circle cx="2.90" cy="4.00" r="4.56" fill="#1a1a1a"/><circle cx="-2.90" cy="4.00" r="4.56" fill="#1a1a1a"/><circle cx="-4.70" cy="-1.53" r="4.56" fill="#1a1a1a"/><circle cx="0" cy="0" r="2.66" fill="#fff"/></g><g transform="translate(614 539.5)"><circle cx="0.00" cy="-4.94" r="4.56" fill="#1a1a1a"/><circle cx="4.70" cy="-1.53" r="4.56" fill="#1a1a1a"/><circle cx="2.90" cy="4.00" r="4.56" fill="#1a1a1a"/><circle cx="-2.90" cy="4.00" r="4.56" fill="#1a1a1a"/><circle cx="-4.70" cy="-1.53" r="4.56" fill="#1a1a1a"/><circle cx="0" cy="0" r="2.66" fill="#fff"/></g><circle cx="552.5" cy="539" r="5.6" fill="#1a1a1a"/><path d="M552.5 539 L548.6 539 A3.9 3.9 0 0 1 552.5 535.1Z" fill="#fff"/><circle cx="595.5" cy="539" r="5.6" fill="#1a1a1a"/><path d="M595.5 539 L591.6 539 A3.9 3.9 0 0 1 595.5 535.1Z" fill="#fff"/><path d="M570.5 549.5 Q574.5 556 578.5 549.5" stroke="#1a1a1a" stroke-width="2.2" fill="none"/></svg><svg class="a" style="left:230px;top:800px" width="670" height="760" viewBox="230 800 670 760" overflow="visible"><defs><linearGradient id="pbg" gradientUnits="userSpaceOnUse" x1="0" y1="807" x2="0" y2="1547"><stop offset="0" stop-color="#efeff0"/><stop offset="0.477" stop-color="#ebebed"/><stop offset="0.524" stop-color="#e2e5e9"/><stop offset="0.585" stop-color="#ccd3dc"/><stop offset="0.666" stop-color="#bac6d4"/><stop offset="0.801" stop-color="#b1c1d5"/><stop offset="1" stop-color="#adbfd5"/></linearGradient><filter id="psh" x="-15%" y="-15%" width="130%" height="130%"><feGaussianBlur in="SourceAlpha" stdDeviation="7"/><feOffset dy="4"/><feComponentTransfer><feFuncA type="linear" slope="0.3"/></feComponentTransfer><feMerge><feMergeNode/><feMergeNode in="SourceGraphic"/></feMerge></filter></defs><path filter="url(#psh)" d="M254 832 L535 832 Q548 832 556 820 L561 811 Q564 806.5 567 811 L572 820 Q580 832 593 832 L874 832 Q884 832 884 842 L884 1537 Q884 1547 874 1547 L254 1547 Q244 1547 244 1537 L244 842 Q244 832 254 832Z" fill="url(#pbg)" stroke="rgba(0,0,0,0.18)" stroke-width="1"/><path d="M245 1470.8 L883 1470.8" stroke="#7a8594" stroke-width="1.6"/><rect x="862" y="843" width="15" height="35" rx="7.5" fill="#b7b7b7"/></svg><div class="t" style="left:272.8px;top:851.42px;font-size:25.5px;color:#707070;transform-origin:0 0;transform:scaleX(0.9133);">FRÉQUEMMENT UTILISÉS</div>
<div class="t" style="left:272.8px;top:958.52px;font-size:25.5px;color:#707070;transform-origin:0 0;transform:scaleX(0.8929);">FAVORIS</div>
<div class="t" style="left:272.8px;top:1077.12px;font-size:25.5px;color:#707070;transform-origin:0 0;transform:scaleX(0.9067);">ÉMOTICÔNES ET PERSONNAGES</div>
<svg class="e" style="left:273.0px;top:884.0px" width="46" height="46" viewBox="0 0 64 64"><use href="#e-lips"/></svg><svg class="e" style="left:356.5px;top:884.5px" width="48" height="48" viewBox="0 0 64 64"><use href="#e-rofl"/></svg><svg class="a" style="left:0;top:0" width="900" height="1100"><g stroke="#000" stroke-width="4.6" fill="none" stroke-linecap="butt"><circle cx="284" cy="1014.5" r="6"/><circle cx="308" cy="1014.5" r="6"/><circle cx="284" cy="1039" r="6"/><circle cx="308" cy="1039" r="6"/><path d="M290 1014.5 L290 1039 M302 1014.5 L302 1039 M284 1020.8 L308 1020.8 M284 1032.8 L308 1032.8"/><path d="M360 1010.5 L375 1010.5 L390.5 1044 L404 1044 M386 1010.5 L404 1010.5"/><path d="M466 1009 L448.5 1027.5 L456.5 1027.5 L456.5 1043.5 L475.5 1043.5 L475.5 1027.5 L483.5 1027.5Z" stroke-width="4.2" stroke-linejoin="miter" stroke-miterlimit="3"/><path d="M621.5 1025 L635 1011 L648.5 1025"/></g><path d="M529 1027 L556 1027" stroke="#000" stroke-width="4.2"/><path d="M553.2 1016.3 L564.5 1027 L553.2 1037.6Z" fill="#000"/><rect x="568" y="1016" width="4" height="22" fill="#000"/><path d="M706 1027 L727 1027 A10 10 0 0 0 727 1007 L726 1007" stroke="#000" stroke-width="4" fill="none"/><path d="M708 1016.3 L697 1027 L708 1037.6Z" fill="#000"/></svg><svg class="e" style="left:272.4px;top:1120.0px" width="48" height="48" viewBox="0 0 64 64"><use href="#e-grin"/></svg><svg class="e" style="left:356.4px;top:1120.0px" width="48" height="48" viewBox="0 0 64 64"><use href="#e-smiley"/></svg><svg class="e" style="left:440.4px;top:1120.0px" width="48" height="48" viewBox="0 0 64 64"><use href="#e-smile"/></svg><svg class="e" style="left:524.4px;top:1120.0px" width="48" height="48" viewBox="0 0 64 64"><use href="#e-beam"/></svg><svg class="e" style="left:608.4px;top:1120.0px" width="48" height="48" viewBox="0 0 64 64"><use href="#e-squint"/></svg><svg class="e" style="left:692.4px;top:1120.0px" width="48" height="48" viewBox="0 0 64 64"><use href="#e-sweat"/></svg><svg class="e" style="left:777.0px;top:1120.0px" width="48" height="48" viewBox="0 0 64 64"><use href="#e-joy"/></svg><svg class="e" style="left:272.4px;top:1192.0px" width="48" height="48" viewBox="0 0 64 64"><use href="#e-rofl"/></svg><svg class="e" style="left:356.4px;top:1192.0px" width="48" height="48" viewBox="0 0 64 64"><use href="#e-relaxed"/></svg><svg class="e" style="left:440.4px;top:1192.0px" width="48" height="48" viewBox="0 0 64 64"><use href="#e-blush"/></svg><svg class="e" style="left:524.4px;top:1192.0px" width="48" height="48" viewBox="0 0 64 64"><use href="#e-halo"/></svg><svg class="e" style="left:608.4px;top:1192.0px" width="48" height="48" viewBox="0 0 64 64"><use href="#e-slight"/></svg><svg class="e" style="left:692.4px;top:1192.0px" width="48" height="48" viewBox="0 0 64 64"><use href="#e-upside"/></svg><svg class="e" style="left:777.0px;top:1192.0px" width="48" height="48" viewBox="0 0 64 64"><use href="#e-wink"/></svg><svg class="e" style="left:272.4px;top:1264.0px" width="48" height="48" viewBox="0 0 64 64"><use href="#e-relieved"/></svg><svg class="e" style="left:356.4px;top:1264.0px" width="48" height="48" viewBox="0 0 64 64"><use href="#e-hearteyes"/></svg><svg class="e" style="left:440.4px;top:1264.0px" width="48" height="48" viewBox="0 0 64 64"><use href="#e-hearts"/></svg><svg class="e" style="left:524.4px;top:1264.0px" width="48" height="48" viewBox="0 0 64 64"><use href="#e-kissheart"/></svg><svg class="e" style="left:608.4px;top:1264.0px" width="48" height="48" viewBox="0 0 64 64"><use href="#e-kissing"/></svg><svg class="e" style="left:692.4px;top:1264.0px" width="48" height="48" viewBox="0 0 64 64"><use href="#e-kisssmile"/></svg><svg class="e" style="left:777.0px;top:1264.0px" width="48" height="48" viewBox="0 0 64 64"><use href="#e-kissclosed"/></svg><svg class="e" style="left:272.4px;top:1336.0px" width="48" height="48" viewBox="0 0 64 64"><use href="#e-yum"/></svg><svg class="e" style="left:356.4px;top:1336.0px" width="48" height="48" viewBox="0 0 64 64"><use href="#e-tongue"/></svg><svg class="e" style="left:440.4px;top:1336.0px" width="48" height="48" viewBox="0 0 64 64"><use href="#e-sqtongue"/></svg><svg class="e" style="left:524.4px;top:1336.0px" width="48" height="48" viewBox="0 0 64 64"><use href="#e-winktongue"/></svg><svg class="e" style="left:608.4px;top:1336.0px" width="48" height="48" viewBox="0 0 64 64"><use href="#e-zany"/></svg><svg class="e" style="left:692.4px;top:1336.0px" width="48" height="48" viewBox="0 0 64 64"><use href="#e-raised"/></svg><svg class="e" style="left:777.0px;top:1336.0px" width="48" height="48" viewBox="0 0 64 64"><use href="#e-monocle"/></svg><svg class="e" style="left:272.4px;top:1407.0px" width="48" height="48" viewBox="0 0 64 64"><use href="#e-nerd"/></svg><svg class="e" style="left:356.4px;top:1407.0px" width="48" height="48" viewBox="0 0 64 64"><use href="#e-cool"/></svg><svg class="e" style="left:440.4px;top:1407.0px" width="48" height="48" viewBox="0 0 64 64"><use href="#e-star"/></svg><svg class="e" style="left:524.4px;top:1407.0px" width="48" height="48" viewBox="0 0 64 64"><use href="#e-party"/></svg><svg class="e" style="left:608.4px;top:1407.0px" width="48" height="48" viewBox="0 0 64 64"><use href="#e-smirk"/></svg><svg class="e" style="left:692.4px;top:1407.0px" width="48" height="48" viewBox="0 0 64 64"><use href="#e-unamused"/></svg><svg class="e" style="left:777.0px;top:1407.0px" width="48" height="48" viewBox="0 0 64 64"><use href="#e-disappointed"/></svg><div class="a" style="left:387px;top:1188px;width:487px;height:38px;background:#f4efd6;box-shadow:0 0 0 1px #d8d2b6,0 2px 4px rgba(0,0,0,0.12)"></div><div class="t" style="left:400.6px;top:1192.73px;font-size:23.5px;color:#35332b;letter-spacing:-0.003px;-webkit-text-stroke:0.25px #35332b">visage avec large sourire, la bouche ouverte</div>
<svg class="a" style="left:0;top:0" width="900" height="1600"><g fill="none" stroke="#233247" stroke-width="2.3" stroke-linecap="round" stroke-linejoin="round"><circle cx="288.7" cy="1508.7" r="15.3" stroke="#1b3fb8"/><path d="M288.7 1494.5 L288.7 1509 L281.3 1509" stroke="#1b3fb8"/><circle cx="350.8" cy="1508.7" r="15.3"/><path d="M342 1511.5 Q350.8 1513.5 359.6 1511.5 Q358.5 1520 350.8 1520 Q343.1 1520 342 1511.5Z"/><circle cx="404.5" cy="1498.5" r="5"/><circle cx="421.5" cy="1498.5" r="5"/><path d="M401 1503 Q405 1497 413 1497 Q421 1497 425 1503 Q429 1508 428.5 1513 Q428 1520 421 1523 Q417 1524.5 413 1524.5 Q409 1524.5 405 1523 Q398 1520 397.5 1513 Q397 1508 401 1503Z" fill="#b2bfd0"/><path d="M413 1514.5 L413 1518 M409.5 1519.5 Q413 1521 416.5 1519.5"/><path d="M459.5 1500.5 L472 1500.5 M459.8 1500.5 L462.5 1523.5 L466 1523.5 M469 1500.5 L472 1493 L478.5 1494.5"/><path d="M466 1511 Q466 1503.5 477.5 1503.5 Q489 1503.5 489 1511 Z" fill="#b2bfd0"/><path d="M465.5 1515.5 L489.5 1515.5 M466 1519.5 L489 1519.5 Q489 1523.5 486 1523.5 L469 1523.5 Q466 1523.5 466 1519.5Z"/><circle cx="537" cy="1508.7" r="15.3"/></g><path d="M537 1503 L542.3 1506.8 L540.3 1513 L533.7 1513 L531.7 1506.8Z" fill="#233247"/><path d="M537 1494 L537 1503 M542.3 1506.8 L550.5 1503 M540.3 1513 L545 1520.5 M533.7 1513 L529 1520.5 M531.7 1506.8 L523.5 1503" stroke="#233247" stroke-width="1.8"/><path d="M531 1494.8 L537 1493.5 L543 1494.8 L541.5 1498 L532.5 1498Z M550.6 1502 L552.3 1510 L548.5 1508.5 Z M523.4 1502 L521.7 1510 L525.5 1508.5Z M546 1520 L539.5 1524 L544 1524.5 Z M528 1520 L534.5 1524 L530 1524.5Z" fill="#233247"/><g fill="none" stroke="#233247" stroke-width="2.3" stroke-linecap="butt" stroke-linejoin="miter"><path d="M591.5 1506 L591.5 1494.3 L602.7 1494.3 L602.7 1502 M584.2 1523 L584.2 1505.8 L589 1505.8 M613.6 1523 L613.6 1502 L606 1502"/><path d="M593 1512 Q594 1507.5 598.7 1507.5 Q603.5 1507.5 604.5 1512 L608.5 1513 L608.5 1521 L589 1521 L589 1513Z" fill="#b2bfd0"/></g><rect x="589.5" y="1520" width="4" height="4.5" fill="#233247"/><rect x="604" y="1520" width="4" height="4.5" fill="#233247"/><rect x="594" y="1497" width="2.2" height="2.2" fill="#233247"/><rect x="598" y="1497" width="2.2" height="2.2" fill="#233247"/><rect x="594" y="1501" width="2.2" height="2.2" fill="#233247"/><rect x="598" y="1501" width="2.2" height="2.2" fill="#233247"/><g fill="none" stroke="#233247" stroke-width="2.3" stroke-linecap="round" stroke-linejoin="round"><path d="M656 1514.5 Q656 1510.5 653 1507 Q650.2 1503.5 650.2 1500 Q651 1493.5 661 1493.5 Q671 1493.5 671.8 1500 Q671.8 1503.5 669 1507 Q666 1510.5 666 1514.5 Z"/><path d="M657.5 1515 L657.5 1522.5 Q657.5 1524.5 660 1524.5 L664.5 1524.5 L664.5 1515 M657.5 1519.5 L664 1519.5 M658 1505.5 L661 1509 L664 1505.5 M661 1509 L661 1513.5"/><rect x="708.7" y="1494.3" width="29" height="29.3" rx="6"/><path d="M714 1499.5 L723 1499.5 M714 1502.5 L723 1502.5 M718.5 1502.5 L718.5 1508.5"/><path d="M775.2 1523.5 L775.2 1496 Q781 1493.5 786 1496.5 Q791 1499.5 795.5 1496.5 L795.5 1510 Q791 1513 786 1510 Q781 1507 775.2 1509.5"/></g><path d="M832 1501.5 L839 1508.8 L832 1516 M840 1501.5 L847 1508.8 L840 1516" fill="none" stroke="#233247" stroke-width="2.8" stroke-linecap="round" stroke-linejoin="round"/><circle cx="408" cy="1508.3" r="1.7" fill="#233247"/><circle cx="418" cy="1508.3" r="1.7" fill="#233247"/><path d="M410.5 1512.5 L415.5 1512.5 L413 1515Z" fill="#233247"/><circle cx="345.5" cy="1504" r="1.7" fill="#233247"/><circle cx="356" cy="1504" r="1.7" fill="#233247"/><ellipse cx="727.5" cy="1507" rx="2.8" ry="2.2" fill="#233247"/><path d="M730 1506.5 L730 1497.5 Q733 1499 734 1502" stroke="#233247" stroke-width="1.8" fill="none"/></svg><div class="t" style="left:711.5px;top:1507.83px;font-size:14px;color:#233247;letter-spacing:0.000px;font-weight:bold;letter-spacing:0.3px">&amp;%</div>
</body></html>
